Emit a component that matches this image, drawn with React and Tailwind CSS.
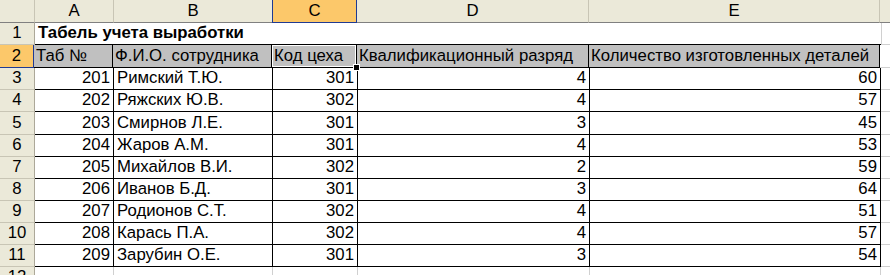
import React from 'react'

const cols = [
  { key: 'A', w: 'w-[79px]' },
  { key: 'B', w: 'w-[159px]' },
  { key: 'C', w: 'w-[85px]' },
  { key: 'D', w: 'w-[232px]' },
  { key: 'E', w: 'w-[291px]' },
]

const heights = ['h-[22px]', 'h-[23px]', 'h-[22px]', 'h-[22px]', 'h-[23px]', 'h-[22px]', 'h-[22px]', 'h-[22px]', 'h-[22px]', 'h-[22px]', 'h-[22px]']

const rows = [
  ['201', 'Римский Т.Ю.', '301', '4', '60'],
  ['202', 'Ряжских Ю.В.', '302', '4', '57'],
  ['203', 'Смирнов Л.Е.', '301', '3', '45'],
  ['204', 'Жаров А.М.', '301', '4', '53'],
  ['205', 'Михайлов В.И.', '302', '2', '59'],
  ['206', 'Иванов Б.Д.', '301', '3', '64'],
  ['207', 'Родионов С.Т.', '302', '4', '51'],
  ['208', 'Карась П.А.', '302', '4', '57'],
  ['209', 'Зарубин О.Е.', '301', '3', '54'],
]

const headers = ['Таб №', 'Ф.И.О. сотрудника', 'Код цеха', 'Квалификационный разряд', 'Количество изготовленных деталей']

const RowHead = ({ n, h, active }) => (
  <div
    className={`w-[35px] shrink-0 ${h} box-border flex items-center justify-center border-b ${
      active ? 'bg-[#fcc86a] border-r-2 border-r-[#1f3a93] border-b-[#1f3a93]' : 'bg-[#ebe9d9] border-r border-r-[#aca899] border-b-[#c8c5b5]'
    }`}
  >
    {n}
  </div>
)

export default function App() {
  return (
    <div className="w-[890px] h-[275px] overflow-hidden bg-white text-[16.75px] leading-none text-black" style={{ fontFamily: '"Liberation Sans", Arial, sans-serif' }}>
      {/* column headers */}
      <div className="flex h-[23px]">
        <div className="w-[35px] shrink-0 box-border bg-[#ebe9d9] border-r border-b border-r-[#c8c5b5] border-b-[#808080]" />
        {cols.map((c) => (
          <div
            key={c.key}
            className={`${c.w} shrink-0 box-border flex items-center justify-center border-b ${
              c.key === 'C'
                ? 'bg-[#fcc86a] border-x border-x-[#1f3a93] border-b-[#1f3a93] -ml-px'
                : 'bg-[#ebe9d9] border-r border-r-[#c8c5b5] border-b-[#808080]'
            }`}
          >
            {c.key}
          </div>
        ))}
        <div className="flex-1 box-border bg-[#ebe9d9] border-b border-b-[#808080]" />
      </div>

      {/* row 1: title */}
      <div className="flex h-[22px]">
        <RowHead n={1} h="h-[22px]" />
        <div className="w-[846px] shrink-0 box-border border-b border-black flex items-center pl-[3px] font-bold whitespace-nowrap">
          Табель учета выработки
        </div>
        <div className="flex-1 box-border border-l border-b border-[#d0d0d0]" />
      </div>

      {/* row 2: table headers */}
      <div className="flex h-[23px]">
        <RowHead n={2} h="h-[23px]" active />
        {cols.map((c, i) => (
          <div
            key={c.key}
            className={`${c.w} shrink-0 box-border relative bg-[#c0c0c0] border-r border-b border-black flex items-center pl-[2px] whitespace-nowrap ${i === 0 ? '-ml-px' : ''}`}
          >
            {headers[i]}
            {c.key === 'C' && (
              <>
                <div className="absolute -left-px -top-px -right-px -bottom-px border border-black">
                  <div className="w-full h-full border border-white" />
                </div>
                <div className="absolute -right-[4px] -bottom-[4px] w-[7px] h-[7px] bg-black border border-white z-10" />
              </>
            )}
          </div>
        ))}
        <div className="flex-1 box-border border-b border-[#d0d0d0]" />
      </div>

      {/* data rows */}
      {rows.map((r, ri) => {
        const h = heights[ri + 2]
        return (
          <div key={ri} className={`flex ${h}`}>
            <RowHead n={ri + 3} h={h} />
            {cols.map((c, i) => (
              <div
                key={c.key}
                className={`${c.w} shrink-0 box-border border-r border-b border-black flex items-center whitespace-nowrap ${
                  i === 1 ? 'justify-start pl-[3px]' : 'justify-end pr-[3px]'
                }`}
              >
                {r[i]}
              </div>
            ))}
            <div className="flex-1 box-border border-b border-[#d0d0d0]" />
          </div>
        )
      })}

      {/* row 12 partial */}
      <div className="flex h-[22px]">
        <RowHead n={12} h="h-[22px]" />
        {cols.map((c) => (
          <div key={c.key} className={`${c.w} shrink-0 box-border border-r border-[#d0d0d0]`} />
        ))}
        <div className="flex-1" />
      </div>
    </div>
  )
}
